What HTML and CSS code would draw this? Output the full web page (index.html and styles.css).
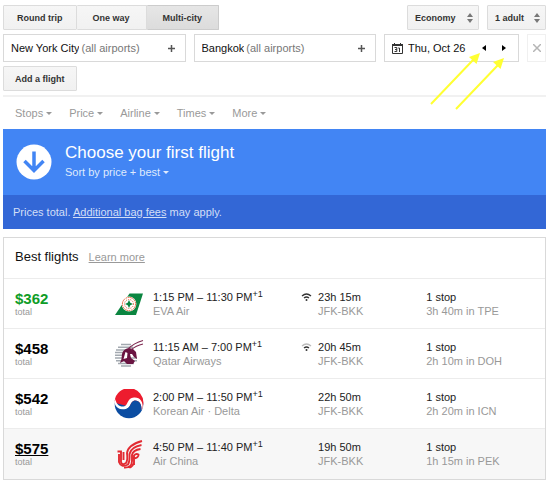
FILE: index.html
```html
<!DOCTYPE html>
<html lang="en">
<head>
<meta charset="utf-8">
<title>Flights: New York City to Bangkok</title>
<link rel="stylesheet" href="styles.css">
</head>
<body>
<form class="search">
  <div class="bar">
    <div class="tabs">
      <button type="button" class="btn">Round trip</button>
      <button type="button" class="btn">One way</button>
      <button type="button" class="btn active" aria-pressed="true">Multi-city</button>
    </div>
    <div class="options">
      <div class="picker cabin">
        <select class="btn" aria-label="Cabin"><option>Economy</option></select>
        <svg class="updown" viewBox="0 0 6 10" aria-hidden="true"><path d="M0 4L3 0L6 4ZM0 6L3 10L6 6Z"/></svg>
      </div>
      <div class="picker people">
        <select class="btn" aria-label="Passengers"><option>1 adult</option></select>
        <svg class="updown" viewBox="0 0 6 10" aria-hidden="true"><path d="M0 4L3 0L6 4ZM0 6L3 10L6 6Z"/></svg>
      </div>
    </div>
  </div>

  <div class="leg">
    <div class="field">
      <label class="place"><input type="text" value="New York City" aria-label="From"><span class="hint">(all airports)</span></label>
      <button type="button" class="plus" aria-label="Add origin"><svg viewBox="0 0 7 7"><path d="M0 3.5H7M3.5 0V7"/></svg></button>
    </div>
    <div class="field">
      <label class="place"><input type="text" value="Bangkok" aria-label="To"><span class="hint">(all airports)</span></label>
      <button type="button" class="plus" aria-label="Add destination"><svg viewBox="0 0 7 7"><path d="M0 3.5H7M3.5 0V7"/></svg></button>
    </div>
    <div class="field date">
      <svg class="calendar" viewBox="0 0 11 11" aria-hidden="true"><path class="frame" d="M.5 1.5H10.5V10.5H.5Z"/><path class="top" d="M0 1H11V3H0ZM2 0H3V1H2ZM8 0H9V1H8Z"/><path class="frame" d="M2.500 4.500H4.800V8.500H2.500M3 6.500H4.800M6.200 5H7.500V9"/></svg>
      <input type="text" value="Thu, Oct 26" aria-label="Departure date">
      <button type="button" class="step" aria-label="Previous day"><svg viewBox="0 0 4 6"><path d="M4 0V6L0 3Z"/></svg></button>
      <button type="button" class="step" aria-label="Next day"><svg viewBox="0 0 4 6"><path d="M0 0V6L4 3Z"/></svg></button>
      <svg class="pointers" viewBox="0 0 80 60" aria-hidden="true">
        <path class="shaft" d="M3 54L46 9M28 59L71 14"/>
        <path class="tip" d="M52 3L48.500 14L41 7ZM76 8L72.500 19L65 12Z"/>
      </svg>
    </div>
    <button type="button" class="remove" aria-label="Remove flight"><svg viewBox="0 0 8 8"><path d="M0 0L8 8M8 0L0 8"/></svg></button>
  </div>
  <button type="button" class="btn add">Add a flight</button>
</form>

<nav class="filters">
  <button type="button">Stops<i class="caret"></i></button>
  <button type="button">Price<i class="caret"></i></button>
  <button type="button">Airline<i class="caret"></i></button>
  <button type="button">Times<i class="caret"></i></button>
  <button type="button">More<i class="caret"></i></button>
</nav>

<section class="banner">
  <div class="choose">
    <svg class="badge" viewBox="0 0 36 36" aria-hidden="true"><circle cx="18" cy="18" r="17.500"/><path d="M18 7.500V26M8.500 17L18 26.500L27.500 17"/></svg>
    <div>
      <h1>Choose your first flight</h1>
      <button type="button" class="sort">Sort by price + best<i class="caret"></i></button>
    </div>
  </div>
  <p class="fees">Prices total. <a href="#fees">Additional bag fees</a> may apply.</p>
</section>

<section class="results">
  <header><h2>Best flights</h2><a href="#more">Learn more</a></header>
  <table>
    <colgroup><col class="c-price"><col class="c-logo"><col class="c-time"><col class="c-wifi"><col class="c-length"><col></colgroup>
    <tbody>
      <tr>
        <td class="price best"><b>$362</b><small>total</small></td>
        <td><svg class="logo" viewBox="0 0 30 30" role="img" aria-label="EVA Air">
          <path fill="#0b8540" d="M1 26L15.500 4.500H29L22 26Z"/><circle cx="15" cy="15" r="7.400" fill="#fff"/>
          <g fill="none" stroke="#e4572f"><circle cx="15" cy="15" r="6.600" stroke-dasharray="1.600 .7"/><circle cx="15" cy="15" r="4.500" stroke-dasharray="1 1.200"/></g>
          <path fill="#0b8540" d="M15 11L16.300 13.700L19 15L16.300 16.300L15 19L13.700 16.300L11 15L13.700 13.700Z"/></svg></td>
        <td><span>1:15 PM – 11:30 PM<sup>+1</sup></span><em>EVA Air</em></td>
        <td class="signal"><svg viewBox="0 0 10 8" role="img" aria-label="Wi-Fi"><path d="M.5 3Q5-1 9.500 3M2.500 5Q5 3 7.500 5"/><circle cx="5" cy="7" r="1"/></svg></td>
        <td><span>23h 15m</span><em>JFK-BKK</em></td>
        <td><span>1 stop</span><em>3h 40m in TPE</em></td>
      </tr>
      <tr>
        <td class="price"><b>$458</b><small>total</small></td>
        <td><svg class="logo" viewBox="0 0 30 30" role="img" aria-label="Qatar Airways">
          <path stroke="#a3a9b0" stroke-width="1.500" d="M7 5.500H17M4 8.200H19M2 10.900H17M1 13.600H12M1 16.300H9M1 19H23M2 21.700H23M4 24.400H20M7 27.100H17"/>
          <path fill="#6a1441" d="M6 24Q8 20 8 15Q9 10 15 9L19 10L22 13L23 20L20 18L18 15L16 15L17 19L21 22L19 25L13 25L10 22Z"/>
          <path fill="none" stroke="#7d2850" stroke-width="1.100" d="M14 10Q20 4 29 1.500M17 11Q22 6.500 29 5"/><path fill="#fff" d="M11.500 13L13.500 14L13 19L9.500 20Z"/></svg></td>
        <td><span>11:15 AM – 7:00 PM<sup>+1</sup></span><em>Qatar Airways</em></td>
        <td class="signal"><svg viewBox="0 0 10 8" role="img" aria-label="Wi-Fi on some legs"><path class="weak" d="M.5 3Q5-1 9.500 3"/><path d="M2.500 5Q5 3 7.500 5"/><circle cx="5" cy="7" r="1"/></svg></td>
        <td><span>20h 45m</span><em>JFK-BKK</em></td>
        <td><span>1 stop</span><em>2h 10m in DOH</em></td>
      </tr>
      <tr>
        <td class="price"><b>$542</b><small>total</small></td>
        <td><svg class="logo" viewBox="0 0 30 30" role="img" aria-label="Korean Air">
          <circle cx="15" cy="15" r="14.300" fill="#0b4da2"/>
          <path fill="#ed1c2e" d="M.7 12A14.300 14.300 0 0 1 29.300 15Q29 19 27.500 21L1.500 14Z"/>
          <path fill="#fff" d="M.7 13.500C1 18 5 21 10.500 20.500C17.500 19.500 15.500 12.500 20.500 11.500C25 11 28 15 27.500 21.500L28.500 19.500C29.500 13 26 8 20 8.500C12.500 9 14.500 17 9.500 17.500C5.500 18 2 15 1.500 10Z"/>
          <path fill="#0b4da2" d="M.8 16C3 19.500 6 20.800 10.500 20.500C17.500 19.500 15.500 12.500 20.500 11.500C25 11 28 15 27.500 21.500L22 27H7Z"/></svg></td>
        <td><span>2:00 PM – 11:50 PM<sup>+1</sup></span><em>Korean Air · Delta</em></td>
        <td></td>
        <td><span>22h 50m</span><em>JFK-BKK</em></td>
        <td><span>1 stop</span><em>2h 20m in ICN</em></td>
      </tr>
      <tr class="hover">
        <td class="price"><b>$575</b><small>total</small></td>
        <td><svg class="logo" viewBox="0 0 30 30" role="img" aria-label="Air China">
          <g fill="none" stroke="#e22b32" stroke-width="1.900"><path d="M3.500 12.500H7V23Q8 27 12 24Q14 21 13 14Q14 6 28 2"/><path d="M9.500 13V21M5 15V23Q7 29 14 25.500Q16 22 15.500 15Q17 8 27.500 6"/><path d="M10 28.500Q18 29 18 22V16Q19 11 26.500 10"/><path d="M20 26V16.500Q22 14 24.500 15.500Q25 19 19 19.500M14 27.500Q17 30 20 24"/></g></svg></td>
        <td><span>4:50 PM – 11:40 PM<sup>+1</sup></span><em>Air China</em></td>
        <td></td>
        <td><span>19h 50m</span><em>JFK-BKK</em></td>
        <td><span>1 stop</span><em>1h 15m in PEK</em></td>
      </tr>
    </tbody>
  </table>
</section>
</body>
</html>
```
FILE: styles.css
```css
* { box-sizing: border-box; }

body {
  margin: 0;
  padding: 5px 4px 3px 3px;
  background: #fff;
  color: #222;
  font: 11px/14px "Liberation Sans", Arial, sans-serif;
}

button, input, select { margin: 0; padding: 0; border: 0; background: none; color: inherit; font: inherit; }
button { cursor: pointer; }
svg { display: block; }
h1, h2, p { margin: 0; font-weight: normal; }

/* Search form */
.search { display: flex; flex-direction: column; gap: 4px; padding-bottom: 4px; border-bottom: 2px solid #f1f1f1; }
.bar { display: flex; justify-content: space-between; }
.btn {
  height: 25px;
  border: 1px solid #dcdcdc;
  border-radius: 1px;
  background: linear-gradient(#f6f6f6, #f1f1f1);
  color: #333;
  font-size: 9px;
  font-weight: bold;
}
.tabs { display: flex; }
.tabs .btn { padding: 0 13px; }
.tabs .btn + .btn { border-left: 0; padding: 0 16px; }
.tabs .active { border-color: #ccc; background: linear-gradient(#e6e6e6, #dcdcdc); }
.options { display: flex; gap: 8px; }
.picker { display: flex; align-items: center; position: relative; }
.picker select { width: 100%; padding-left: 7px; appearance: none; }
.cabin { width: 72px; }
.people { width: 59px; }
.updown { position: absolute; right: 6px; width: 6px; height: 10px; fill: #777; pointer-events: none; }

.leg { display: flex; gap: 8px; }
.field {
  display: flex;
  flex: 1;
  align-items: center;
  height: 28px;
  min-width: 0;
  padding: 0 10px 0 7px;
  border: 1px solid #d9d9d9;
}
.field input { color: #111; }
.place { display: flex; flex: 1; gap: 2px; min-width: 0; }
.place input { field-sizing: content; }
.hint { color: #777; }
.plus svg { width: 7px; height: 7px; fill: none; stroke: #555; stroke-width: 1.5; }
.date { position: relative; flex: 0 0 135px; padding: 0 12px 0 7px; }
.date input { flex: 1; width: 0; margin-left: 5px; }
.calendar { width: 11px; height: 11px; }
.calendar .frame { fill: none; stroke: #333; }
.calendar .top { fill: #333; }
.step + .step { margin-left: 16px; }
.step svg { width: 4px; height: 6px; fill: #000; }
.pointers { position: absolute; left: 43px; top: 15px; width: 80px; height: 60px; pointer-events: none; }
.pointers .shaft { fill: none; stroke: #ffff32; stroke-width: 2; }
.pointers .tip { fill: #ffff32; }
.remove { display: flex; align-items: center; justify-content: center; width: 19px; border: 1px solid #f0f0f0; }
.remove svg { width: 8px; height: 8px; fill: none; stroke: #b5b5b5; stroke-width: 1.5; }
.add { align-self: flex-start; padding: 0 11px; }

/* Filters */
.filters { display: flex; gap: 17px; padding: 9px 12px; color: #999; }
.caret {
  display: inline-block;
  margin-left: 3px;
  border: 3px solid transparent;
  border-top-color: currentColor;
  border-bottom: 0;
  vertical-align: 2px;
}

/* Banner */
.banner { background: #4285f4; color: #fff; }
.choose { display: flex; align-items: center; gap: 13px; height: 66px; padding: 0 13px; }
.badge { width: 36px; height: 36px; fill: #fff; }
.badge path { fill: none; stroke: #4285f4; stroke-width: 3.5; }
h1 { font-size: 17px; line-height: 20px; }
.sort { height: 18px; color: #dfeafd; }
.fees { padding: 10px; background: #3367d6; color: #d3dff6; }
.fees a { color: inherit; }

/* Results */
.results { margin-top: 8px; border: 1px solid #d9d9d9; }
.results header { display: flex; align-items: baseline; gap: 10px; padding: 11px 11px 13px; }
h2 { color: #111; font-size: 13px; line-height: 16px; }
header a { color: #999; }
table { width: 100%; border-collapse: collapse; table-layout: fixed; }
tr { height: 50px; border-top: 1px solid #ececec; }
td { padding: 0; vertical-align: middle; }
td span, td em, td small { display: block; white-space: nowrap; }
td em { color: #999; font-style: normal; }
.c-price { width: 110px; }
.c-logo { width: 39px; }
.c-time { width: 27%; }
.c-wifi { width: 19px; }
.c-length { width: 20%; }
.price { padding-left: 11px; color: #000; }
.price b { display: block; font-size: 15px; line-height: 16px; }
.price small { color: #999; font-size: 9px; line-height: 10px; }
.price.best b { color: #0f9d28; }
.hover { background: #f7f7f7; }
.hover b { text-decoration: underline; }
.logo { width: 30px; height: 30px; }
sup { font-size: 9px; line-height: 0; vertical-align: 4px; }
.signal { vertical-align: top; padding: 14px 0 0 2px; }
.signal svg { width: 11px; height: 8px; fill: #333; }
.signal path { fill: none; stroke: #333; stroke-width: 1.3; }
.signal .weak { stroke: #bbb; }
```
